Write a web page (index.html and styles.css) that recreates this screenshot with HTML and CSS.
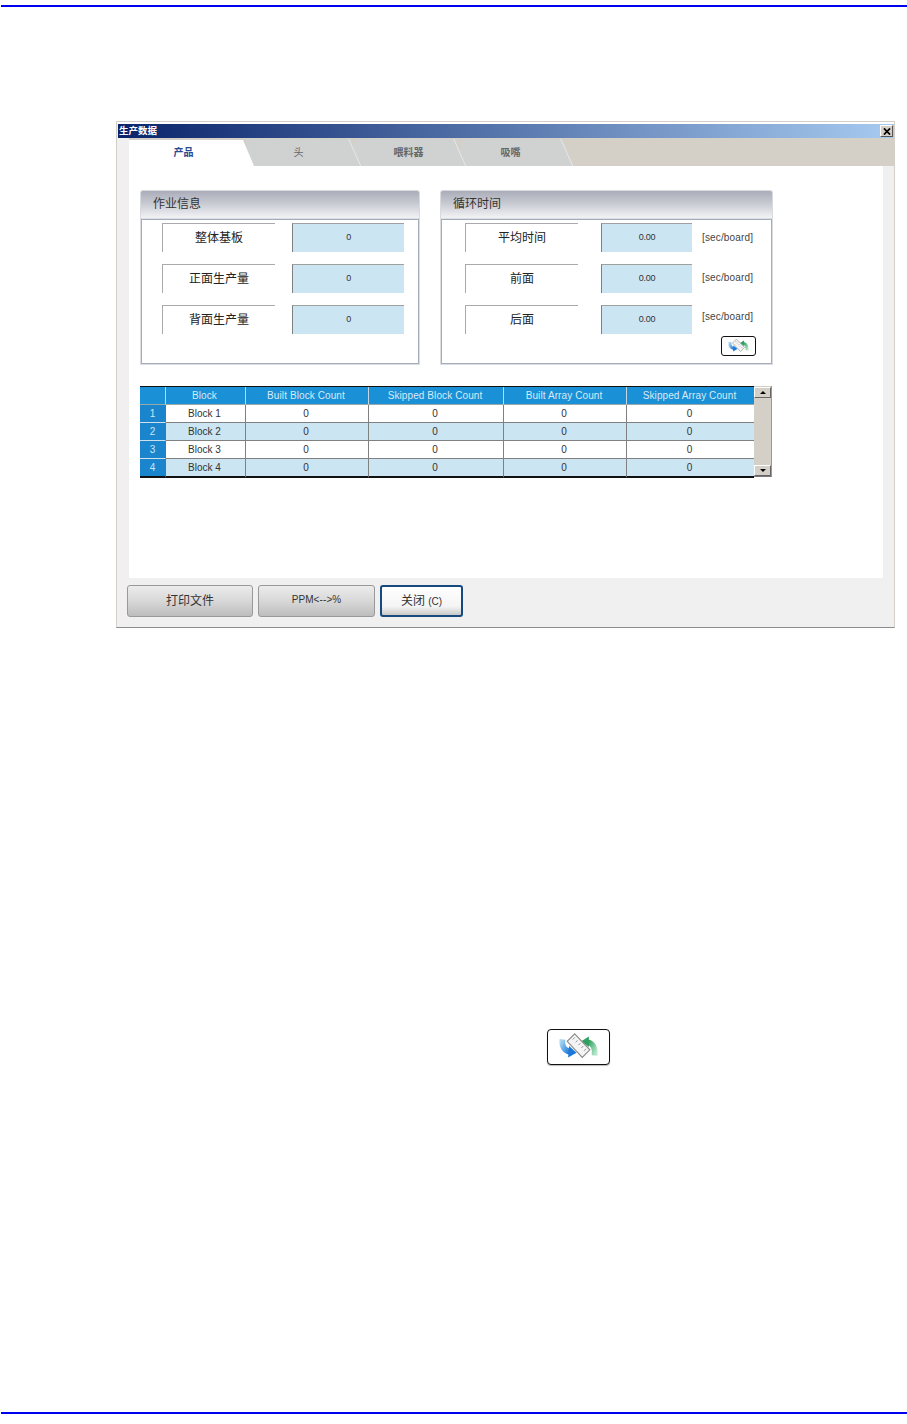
FILE: index.html
```html
<!DOCTYPE html>
<html lang="zh">
<head>
<meta charset="utf-8">
<title>生产数据</title>
<link rel="stylesheet" href="styles.css">
</head>
<body>
<svg class="defs" width="0" height="0" aria-hidden="true">
  <defs>
    <linearGradient id="blueArrow" x1="0" y1="0" x2="1" y2="1"><stop offset="0" stop-color="#a8d6f2"/><stop offset="1" stop-color="#1c78d8"/></linearGradient>
    <linearGradient id="greenArrow" x1="0" y1="0" x2="1" y2="1"><stop offset="0" stop-color="#2fa060"/><stop offset="1" stop-color="#b8e8cc"/></linearGradient>
    <symbol id="swap" viewBox="0 0 62 36">
      <path d="M14 10C13 17 16 22 22 23" fill="none" stroke="url(#blueArrow)" stroke-width="6"/>
      <path d="M21 17L29 24L20 29Z" fill="#1c78d8"/>
      <path d="M48 27C49 19 46 14 41 13" fill="none" stroke="url(#greenArrow)" stroke-width="6"/>
      <path d="M42 7L34 12L42 18Z" fill="#2fa060"/>
      <path d="M27 4L43 21L35 29L19 12Z" fill="#f4f4f4" stroke="#8a8a8a" stroke-width="1.2"/>
      <path d="M25 10L27 8M28 13L30 11M31 16L33 14M34 19L36 17M37 22L39 20" stroke="#8a8a8a" stroke-width="1"/>
    </symbol>
  </defs>
</svg>
<div class="page">
  <div class="rule"></div>
  <section class="dialog">
    <header class="titlebar">
      <span class="title">生产数据</span>
      <span class="close"><svg class="close-x" viewBox="0 0 9 8"><path d="M1 0.5L8 7.5M8 0.5L1 7.5" stroke="#000" stroke-width="2"/></svg></span>
    </header>
    <nav class="tabs">
      <span class="tab tab-active">产品</span>
      <span class="tab tab-2">头</span>
      <span class="tab tab-3">喂料器</span>
      <span class="tab tab-4">吸嘴</span>
    </nav>
    <main class="content">
      <div class="panels">
        <div class="panel panel-left">
          <div class="panel-head">作业信息</div>
          <div class="panel-body">
            <div class="rows">
              <div class="row"><div class="label">整体基板</div><div class="value">0</div></div>
              <div class="row"><div class="label">正面生产量</div><div class="value">0</div></div>
              <div class="row"><div class="label">背面生产量</div><div class="value">0</div></div>
            </div>
          </div>
        </div>
        <div class="panel panel-right">
          <div class="panel-head">循环时间</div>
          <div class="panel-body">
            <div class="rows">
              <div class="row"><div class="label">平均时间</div><div class="value">0.00</div><div class="unit">[sec/board]</div></div>
              <div class="row"><div class="label">前面</div><div class="value">0.00</div><div class="unit unit-mid">[sec/board]</div></div>
              <div class="row"><div class="label">后面</div><div class="value">0.00</div><div class="unit unit-low">[sec/board]</div></div>
            </div>
            <div class="icon-btn icon-btn-small"><svg class="icon"><use href="#swap"/></svg></div>
          </div>
        </div>
      </div>
      <div class="grid-wrap">
        <table class="grid">
          <colgroup>
            <col class="c0"><col class="c1"><col class="c2"><col class="c3"><col class="c4"><col class="c5">
          </colgroup>
          <thead>
            <tr><th></th><th>Block</th><th>Built Block Count</th><th>Skipped Block Count</th><th>Built Array Count</th><th>Skipped Array Count</th></tr>
          </thead>
          <tbody>
            <tr><th>1</th><td>Block 1</td><td>0</td><td>0</td><td>0</td><td>0</td></tr>
            <tr class="alt"><th>2</th><td>Block 2</td><td>0</td><td>0</td><td>0</td><td>0</td></tr>
            <tr><th>3</th><td>Block 3</td><td>0</td><td>0</td><td>0</td><td>0</td></tr>
            <tr class="alt last"><th>4</th><td>Block 4</td><td>0</td><td>0</td><td>0</td><td>0</td></tr>
          </tbody>
        </table>
        <div class="scrollbar">
          <span class="sb-btn"><i class="arrow-up"></i></span>
          <span class="sb-btn"><i class="arrow-down"></i></span>
        </div>
      </div>
    </main>
    <footer class="actions">
      <button class="btn btn-print">打印文件</button>
      <button class="btn btn-ppm">PPM&lt;--&gt;%</button>
      <button class="btn btn-close">关闭 <span class="btn-key">(C)</span></button>
    </footer>
  </section>
  <div class="icon-btn icon-btn-large"><svg class="icon"><use href="#swap"/></svg></div>
  <div class="rule rule-bottom"></div>
</div>
</body>
</html>
```
FILE: styles.css
```css
* { box-sizing: border-box; }
html, body { margin: 0; padding: 0; background: #fff; }
body { font-family: "Liberation Sans", "Noto Sans CJK SC", sans-serif; color: #222; overflow: hidden; }
.defs { position: absolute; }
.page { height: 1424px; display: flex; flex-direction: column; padding-top: 5px; }
.rule { height: 2px; margin-left: 1px; background: #0000f0; flex: none; }
.rule-bottom { margin-top: auto; margin-bottom: 10px; }

.dialog { margin: 114px 0 0 116px; width: 779px; height: 507px; flex: none; display: flex; flex-direction: column;
  border: 1px solid #d4d0c8; border-bottom-color: #8c8c8c; padding: 2px 0 0 1px; background: #f0f0f0; box-shadow: inset 0 2px 0 #fff; }

.titlebar { height: 14px; flex: none; display: flex; align-items: center; justify-content: space-between; padding: 0 1px;
  background: linear-gradient(90deg, #0a246a, #a6caf0); }
.title { color: #fff; font-size: 9.5px; font-weight: 700; line-height: 14px; }
.close { width: 13px; height: 12px; background: #d4d0c8; border: 1px solid; border-color: #fff #555 #555 #fff; display: flex; align-items: center; justify-content: center; }
.close-x { width: 8px; height: 7px; }

.tabs { height: 28px; flex: none; margin-left: 11px; background: #d4d0c8; display: flex; }
.tab { position: relative; font-size: 10px; display: flex; align-items: center; justify-content: center; padding-bottom: 2px; background: #d0d2d1; color: #666; font-weight: 700; }
.tab::after { content: ""; position: absolute; top: 0; bottom: 0; right: 7px; width: 1px; background: #e6e7e6; transform: skewX(24deg); }
.tab-active { width: 125px; margin-right: -11px; padding-right: 16px; background: #fff; color: #2a4a90; z-index: 4;
  clip-path: polygon(0 2px, 114px 2px, 125px 100%, 0 100%); }
.tab-active::after { display: none; }
.tab-2 { width: 119px; margin-right: -12px; padding-right: 8px; z-index: 3; clip-path: polygon(0 100%, 4px 1px, 107px 1px, 119px 100%); font-weight: 400; }
.tab-3 { width: 117px; margin-right: -10px; z-index: 2; clip-path: polygon(0 100%, 5px 1px, 105px 1px, 117px 100%); }
.tab-4 { width: 117px; padding-right: 10px; z-index: 1; clip-path: polygon(0 100%, 5px 1px, 105px 1px, 117px 100%); }

.content { height: 412px; width: 754px; flex: none; margin-left: 11px; background: #fff; padding: 24px 0 0 11px; }
.panels { display: flex; gap: 20px; }
.panel { height: 175px; display: flex; flex-direction: column; }
.panel-left { width: 280px; }
.panel-right { width: 333px; }
.panel-head { height: 29px; flex: none; padding: 5px 0 0 12px; font-size: 12px; line-height: 16px; color: #333; border-radius: 3px 3px 0 0;
  border: 1px solid #d8dade; border-bottom: none; background: linear-gradient(180deg, #aaadb9, #c8cad2 45%, #f6f6f8); }
.panel-body { flex: 1; border: 1px solid #a4aeba; box-shadow: 0 0 0 1px #dcdde0; margin: 0 1px 1px; padding: 3px 0 0 20px; display: flex; flex-direction: column; }
.panel-right .panel-body { padding-left: 23px; }
.rows { display: flex; flex-direction: column; gap: 12px; }
.row { display: flex; align-items: center; height: 29px; }
.label { width: 113px; height: 29px; border-top: 1px solid #aaa; border-left: 1px solid #aaa; font-size: 12px; line-height: 28px; text-align: center; color: #222; }
.value { width: 112px; height: 29px; margin-left: 17px; background: #cce5f3; border-top: 1px solid #a0a0a0; border-left: 1px solid #808080; font-size: 9px; letter-spacing: -0.3px; line-height: 27px; text-align: center; color: #333; }
.panel-right .value { width: 91px; margin-left: 23px; }
.unit { margin-left: 10px; font-size: 10px; letter-spacing: 0.15px; color: #444; }
.unit-mid { margin-bottom: 2px; }
.unit-low { margin-bottom: 6px; }

.icon-btn { border: 1px solid #111; border-radius: 3px; background: #fff; display: flex; }
.icon { width: 100%; height: 100%; }
.icon-btn-small { width: 35px; height: 20px; margin: 2px 15px 0 0; align-self: flex-end; }
.icon-btn-large { width: 63px; height: 36px; flex: none; margin: 401px 0 0 547px; border-radius: 4px; box-shadow: 0 1px 1px #bbb; }

.grid-wrap { margin-top: 21px; width: 632px; display: flex; }
.grid { width: 614px; table-layout: fixed; border-collapse: separate; border-spacing: 0; border-top: 1px solid #111; font-size: 10px; }
.c0 { width: 26px; } .c1 { width: 80px; } .c2 { width: 123px; } .c3 { width: 135px; } .c4 { width: 123px; } .c5 { width: 127px; }
.grid th, .grid td { padding: 0 2px 0 0; height: 18px; line-height: 15px; text-align: center; font-weight: 400; border-right: 1px solid #808080; border-bottom: 1px solid #808080; }
.grid thead th { height: 18px; background: #1a90d6; color: #d8eaf6; letter-spacing: 0.1px; border-right-color: #c3d6e4; border-bottom-color: #9aa; }
.grid tbody th { padding: 0; background: #1a85cc; color: #cfe6f6; border-right-color: #1a85cc; border-bottom-color: #d0dfe8; }
.grid td { background: #fff; color: #333; }
.grid .alt td { background: #cce5f3; }
.grid .last td, .grid .last th { height: 19px; border-bottom: 2px solid #111; }
.grid td:last-child, .grid thead th:last-child { border-right: none; }

.scrollbar { width: 18px; height: 91px; background: #d4d0c8; display: flex; flex-direction: column; justify-content: space-between; padding: 1px 0 0; border-bottom: 1px solid #777; border-right: 1px solid #999; }
.sb-btn { height: 11px; display: flex; align-items: center; justify-content: center; background: #d4d0c8; border: 1px solid; border-color: #fff #666 #666 #fff; }
.arrow-up, .arrow-down { width: 0; height: 0; border-left: 3px solid transparent; border-right: 3px solid transparent; }
.arrow-up { border-bottom: 3px solid #000; }
.arrow-down { border-top: 3px solid #000; }

.actions { flex: 1; display: flex; align-items: flex-start; padding: 7px 0 0 9px; gap: 5px; }
.btn { height: 32px; font-family: inherit; font-size: 12px; color: #333; border: 1px solid #999; border-radius: 3px; padding: 0 0 3px; background: linear-gradient(180deg, #ececec, #d8d8d8 50%, #bdbdbd); }
.btn-print { width: 126px; }
.btn-ppm { width: 117px; font-size: 10px; letter-spacing: 0.1px; }
.btn-close { width: 83px; border: 2px solid #154a80; background: linear-gradient(180deg, #fff, #f4f4f4 70%, #c8c8c8); }
.btn-key { font-size: 10px; }
```
